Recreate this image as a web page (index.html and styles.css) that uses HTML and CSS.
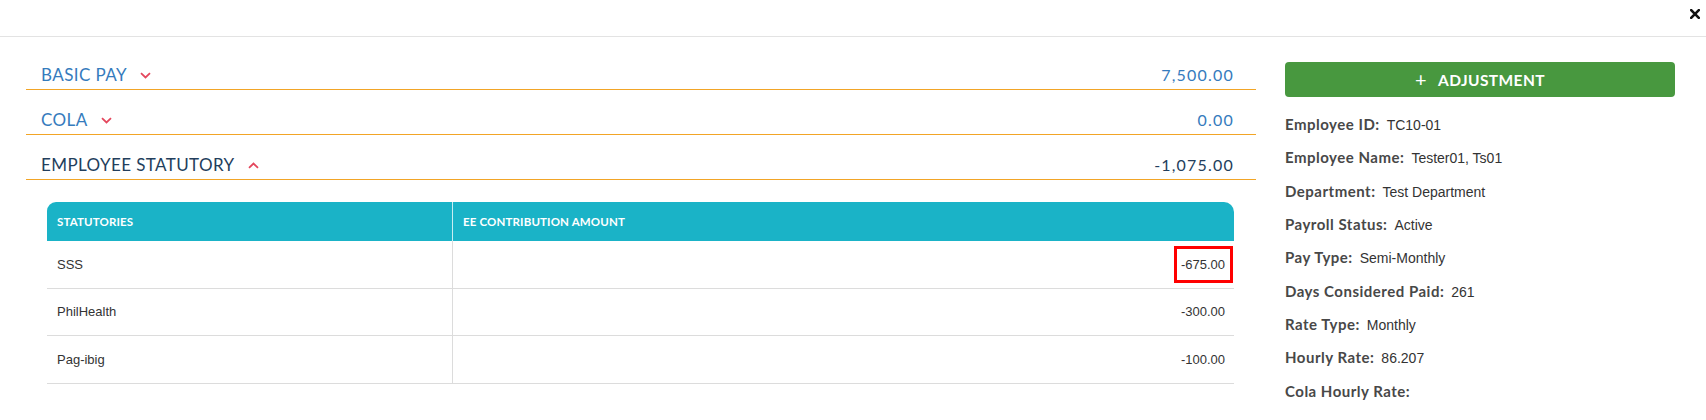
FILE: index.html
```html
<!DOCTYPE html>
<html lang="en">
<head>
<meta charset="utf-8">
<title>Payroll Details</title>
<link rel="stylesheet" href="styles.css">
</head>
<body>
<div class="modal">
  <div class="modal-header">
    <button class="close" aria-label="Close">
      <svg width="10" height="10" viewBox="0 0 10 10"><path d="M1.2 1.2 L8.8 8.8 M8.8 1.2 L1.2 8.8" stroke="#111" stroke-width="2.6" stroke-linecap="square"/></svg>
    </button>
  </div>
  <div class="modal-body">
    <div class="main-col">
      <div class="section">
        <div class="section-head blue">
          <span class="title">BASIC PAY</span>
          <svg class="chev" width="11" height="7" viewBox="0 0 11 7"><path d="M1 1.2 L5.5 5.4 L10 1.2" fill="none" stroke="#e4475d" stroke-width="1.8"/></svg>
          <span class="amount">7,500.00</span>
        </div>
      </div>
      <div class="section">
        <div class="section-head blue">
          <span class="title">COLA</span>
          <svg class="chev" width="11" height="7" viewBox="0 0 11 7"><path d="M1 1.2 L5.5 5.4 L10 1.2" fill="none" stroke="#e4475d" stroke-width="1.8"/></svg>
          <span class="amount">0.00</span>
        </div>
      </div>
      <div class="section open">
        <div class="section-head dark">
          <span class="title">EMPLOYEE STATUTORY</span>
          <svg class="chev" width="11" height="7" viewBox="0 0 11 7"><path d="M1 5.8 L5.5 1.6 L10 5.8" fill="none" stroke="#e4475d" stroke-width="1.8"/></svg>
          <span class="amount">-1,075.00</span>
        </div>
        <div class="section-content">
          <table class="stat-table">
            <thead>
              <tr><th class="col-name">STATUTORIES</th><th class="col-amt">EE CONTRIBUTION AMOUNT</th></tr>
            </thead>
            <tbody>
              <tr><td class="col-name">SSS</td><td class="col-amt num"><span class="highlight">-675.00</span></td></tr>
              <tr><td class="col-name">PhilHealth</td><td class="col-amt num">-300.00</td></tr>
              <tr><td class="col-name">Pag-ibig</td><td class="col-amt num">-100.00</td></tr>
            </tbody>
          </table>
        </div>
      </div>
    </div>
    <aside class="side-col">
      <button class="btn-adjust"><span class="plus">+</span>ADJUSTMENT</button>
      <div class="info">
        <div class="info-row"><span class="label">Employee ID:</span><span class="value">TC10-01</span></div>
        <div class="info-row"><span class="label">Employee Name:</span><span class="value">Tester01, Ts01</span></div>
        <div class="info-row"><span class="label">Department:</span><span class="value">Test Department</span></div>
        <div class="info-row"><span class="label">Payroll Status:</span><span class="value">Active</span></div>
        <div class="info-row"><span class="label">Pay Type:</span><span class="value">Semi-Monthly</span></div>
        <div class="info-row"><span class="label">Days Considered Paid:</span><span class="value">261</span></div>
        <div class="info-row"><span class="label">Rate Type:</span><span class="value">Monthly</span></div>
        <div class="info-row"><span class="label">Hourly Rate:</span><span class="value">86.207</span></div>
        <div class="info-row"><span class="label">Cola Hourly Rate:</span><span class="value"></span></div>
      </div>
    </aside>
  </div>
</div>
</body>
</html>
```

FILE: styles.css
```css
* { box-sizing: border-box; }

html, body {
  margin: 0;
  padding: 0;
  background: #fff;
  font-family: "Lato", "Liberation Sans", sans-serif;
}

.modal {
  width: 1706px;
  height: 420px;
  overflow: hidden;
}

.modal-header {
  height: 37px;
  border-bottom: 1px solid #e3e3e3;
  display: flex;
  justify-content: flex-end;
  align-items: flex-start;
  padding: 9px 6px 0 0;
}

.close {
  border: 0;
  background: none;
  padding: 0;
  margin: 0;
  width: 10px;
  height: 10px;
  display: block;
  cursor: pointer;
}
.close svg { display: block; }

.modal-body {
  display: flex;
  gap: 29px;
  padding: 8px 31px 0 26px;
}

.main-col {
  flex: 1;
  min-width: 0;
}

.section-head {
  height: 45px;
  border-bottom: 1px solid #f2a526;
  display: flex;
  align-items: center;
  padding: 20px 23px 4px 15px;
  font-size: 17px;
  line-height: 20px;
}

.section-head .title {
  letter-spacing: 0.4px;
}

.section-head.blue { color: #357bbd; }
.section-head.dark { color: #233e5c; }

.section-head .chev {
  display: block;
  margin-left: 13px;
}

.section-head .amount {
  margin-left: auto;
  font-size: 16px;
  letter-spacing: 1.2px;
  margin-right: -1px;
}

.section-content {
  padding: 22px 22px 0 21px;
}

.stat-table {
  width: 100%;
  border-collapse: separate;
  border-spacing: 0;
}

.stat-table th {
  height: 39px;
  background: #1ab3c7;
  color: #fff;
  font-family: "Lato", sans-serif;
  font-weight: 700;
  font-size: 11.5px;
  text-align: left;
  padding: 0 10px;
  vertical-align: middle;
  letter-spacing: 0.15px;
}

.stat-table th.col-name {
  width: 406px;
  border-top-left-radius: 9px;
  border-right: 1px solid #c9edf2;
}

.stat-table th.col-amt {
  border-top-right-radius: 10px;
}

.stat-table td {
  height: 47.5px;
  border-bottom: 1px solid #dcdcdc;
  font-family: "Liberation Sans", Arial, sans-serif;
  font-size: 13px;
  color: #333;
  padding: 0 10px;
  vertical-align: middle;
}

.stat-table td.col-name {
  border-right: 1px solid #dcdcdc;
}

.stat-table td.num {
  text-align: right;
  padding-right: 9px;
}

.highlight {
  position: relative;
  display: inline-block;
  line-height: 15px;
}

.highlight::after {
  content: "";
  position: absolute;
  top: -11px;
  bottom: -11px;
  left: -7px;
  right: -8px;
  border: 3px solid #f00;
}

.side-col {
  width: 390px;
  flex: none;
  padding-top: 17px;
}

.btn-adjust {
  width: 100%;
  height: 35px;
  border: 0;
  border-radius: 4px;
  background: #48983f;
  color: #fff;
  font-family: "Lato", sans-serif;
  font-weight: 700;
  font-size: 15.5px;
  letter-spacing: 0.4px;
  display: flex;
  align-items: center;
  justify-content: center;
  padding: 0;
  cursor: pointer;
}

.btn-adjust .plus {
  font-weight: 400;
  font-size: 20px;
  margin-right: 11px;
  line-height: 1;
  position: relative;
  top: -1px;
}

.info {
  padding-top: 17px;
}

.info-row {
  height: 33.33px;
  line-height: 20px;
  font-size: 15px;
  display: flex;
  align-items: baseline;
}

.info-row .label {
  font-weight: 700;
  color: #484848;
  letter-spacing: 0.5px;
}

.info-row .value {
  font-family: "Liberation Sans", Arial, sans-serif;
  font-size: 14px;
  color: #333;
  margin-left: 7px;
}
```
